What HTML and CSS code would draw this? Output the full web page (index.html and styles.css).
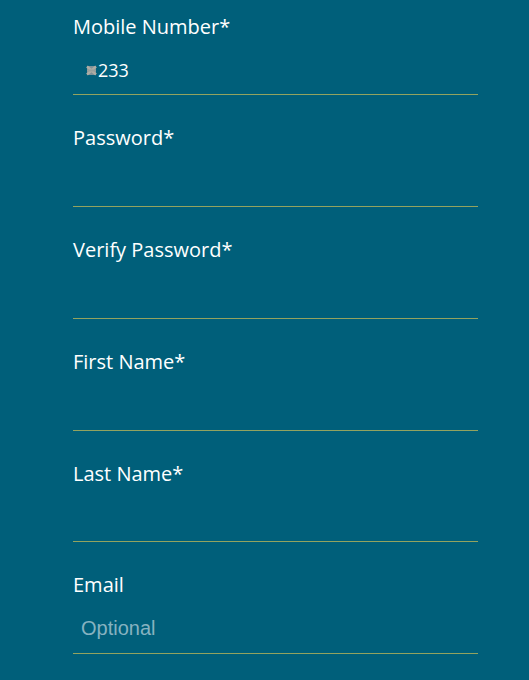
FILE: index.html
```html
<!DOCTYPE html>
<html lang="en">
<head>
    <meta charset="UTF-8">
    <meta name="viewport" content="width=device-width, initial-scale=1.0">
    <title>Register</title>
    <link rel="stylesheet" href="styles.css">
</head>
<body>
    <form class="form">
        <div class="field">
            <label class="field-label">Mobile Number*</label>
            <div class="field-input">
                <svg class="flag" width="11" height="11" viewBox="0 0 11 11">
                    <rect x="1" y="1" width="9" height="9" fill="#7f9298"/>
                    <path d="M1 1.5 L10 9.5 M10 1.5 L1 9.5" stroke="#aeaca4" stroke-width="2.4"/>
                    <path d="M1 5.5 H10" stroke="#98a09c" stroke-width="2"/>
                </svg>
                <span class="field-value">233</span>
            </div>
        </div>
        <div class="field">
            <label class="field-label">Password*</label>
            <div class="field-input"></div>
        </div>
        <div class="field">
            <label class="field-label">Verify Password*</label>
            <div class="field-input"></div>
        </div>
        <div class="field">
            <label class="field-label">First Name*</label>
            <div class="field-input"></div>
        </div>
        <div class="field">
            <label class="field-label">Last Name*</label>
            <div class="field-input"></div>
        </div>
        <div class="field">
            <label class="field-label">Email</label>
            <div class="field-input">
                <span class="field-placeholder">Optional</span>
            </div>
        </div>
    </form>
</body>
</html>
```

FILE: styles.css
```css
html, body {
    height: 100%;
}

body {
    margin: 0;
    background-color: #005f7a;
    font-family: "Open Sans", sans-serif;
    color: #fff;
    overflow: hidden;
}

.form {
    width: 405px;
    margin-left: 73px;
    margin-top: 11.6px;
}

.field {
    height: 111.75px;
}

.field-label {
    display: block;
    height: 30px;
    font-size: 20px;
    line-height: 29px;
}

.field-input {
    display: flex;
    align-items: center;
    height: 52.8px;
    padding-left: 8px;
    border-bottom: 1px solid #93a35f;
}

.flag {
    margin-left: 5px;
    margin-right: 1px;
    margin-top: 6px;
}

.field-value {
    font-size: 18px;
    padding-top: 5px;
}

.field-placeholder {
    padding-top: 4px;
    font-family: "Liberation Sans", Arial, sans-serif;
    font-size: 20px;
    color: #86b2c0;
}
```
